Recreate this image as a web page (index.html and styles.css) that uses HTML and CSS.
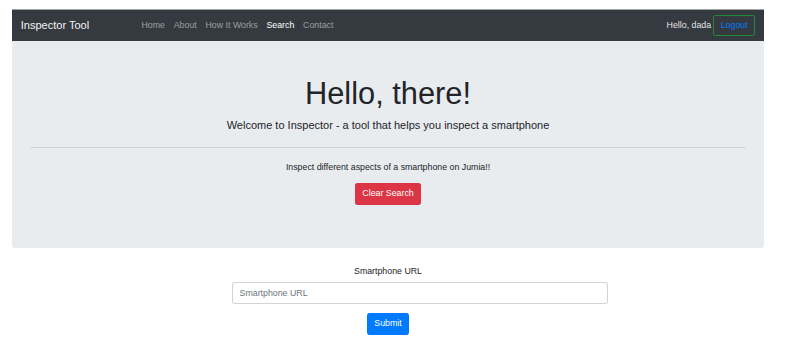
FILE: index.html
```html
<!DOCTYPE html>
<html lang="en">
<head>
  <meta charset="UTF-8">
  <meta name="viewport" content="width=device-width, initial-scale=1.0">
  <title>Inspector Tool</title>
  <link rel="stylesheet" href="styles.css">
</head>
<body>
  <div class="page">
    <nav class="navbar">
      <a class="brand" href="#">Inspector Tool</a>
      <ul class="nav-links">
        <li><a class="nav-link" href="#">Home</a></li>
        <li><a class="nav-link" href="#">About</a></li>
        <li><a class="nav-link" href="#">How It Works</a></li>
        <li><a class="nav-link active" href="#">Search</a></li>
        <li><a class="nav-link" href="#">Contact</a></li>
      </ul>
      <div class="user">
        <span class="greeting">Hello, dada</span>
        <button class="btn btn-logout">Logout</button>
      </div>
    </nav>

    <div class="jumbotron">
      <h1 class="display">Hello, there!</h1>
      <p class="lead">Welcome to Inspector - a tool that helps you inspect a smartphone</p>
      <hr class="divider">
      <p>Inspect different aspects of a smartphone on Jumia!!</p>
      <p><button class="btn btn-danger">Clear Search</button></p>
    </div>

    <form class="search-form">
      <div class="form-group">
        <label for="url">Smartphone URL</label>
        <input id="url" class="form-control" type="text" placeholder="Smartphone URL">
      </div>
      <button class="btn btn-primary" type="submit">Submit</button>
    </form>
  </div>
</body>
</html>
```

FILE: styles.css
```css
html {
  font-size: 8.8px;
}

body {
  margin: 0;
  font-family: "Liberation Sans", Arial, sans-serif;
  font-size: 1rem;
  line-height: 1.5;
  color: #212529;
  background: #fff;
}

.page {
  margin: 0 25px 0 12px;
  padding-top: 9px;
}

/* navbar */
.navbar {
  display: flex;
  align-items: center;
  background-color: #343a40;
  border-top: 1px solid #a0a3a6;
  padding: 0.5rem 1rem;
}

.brand {
  color: #f4f4f4;
  text-decoration: none;
  font-size: 1.25rem;
  line-height: 1.5;
  padding: 0.3125rem 0;
}

.nav-links {
  display: flex;
  list-style: none;
  margin: 0 0 0 48px;
  padding: 0;
}

.nav-link {
  display: block;
  padding: 0.5rem;
  color: rgba(255, 255, 255, 0.5);
  text-decoration: none;
}

.nav-link.active {
  color: #fff;
}

.user {
  margin-left: auto;
  display: flex;
  align-items: center;
}

.greeting {
  color: rgba(255, 255, 255, 0.9);
  margin-right: 2px;
}

/* buttons */
.btn {
  font-family: inherit;
  font-size: 1rem;
  line-height: 1.5;
  padding: 0.375rem 0.75rem;
  border: 1px solid transparent;
  border-radius: 0.25rem;
  cursor: pointer;
}

.btn-logout {
  background: transparent;
  color: #007bff;
  border-color: #238a3c;
}

.btn-danger {
  background-color: #dc3545;
  border-color: #dc3545;
  color: #fff;
}

.btn-primary {
  background-color: #007bff;
  border-color: #007bff;
  color: #fff;
}

/* jumbotron */
.jumbotron {
  background-color: #e9ecef;
  padding: 4rem 2rem 34px;
  margin-bottom: 17px;
  text-align: center;
  border-radius: 0 0 3px 3px;
}

.display {
  font-size: 3.5rem;
  font-weight: 300;
  line-height: 1.2;
  margin: 0 0 0.5rem;
}

.lead {
  font-size: 1.25rem;
  font-weight: 300;
  margin: 0 0 1rem;
}

.divider {
  margin: 1.5rem 0;
  border: 0;
  border-top: 1px solid rgba(0, 0, 0, 0.1);
}

.jumbotron p {
  margin-top: 0;
  margin-bottom: 1rem;
}

/* search form */
.search-form {
  text-align: center;
}

.form-group {
  margin-bottom: 1rem;
}

.form-group label {
  display: block;
  margin-bottom: 0.5rem;
}

.form-control {
  display: block;
  box-sizing: border-box;
  width: 376px;
  margin-left: 220px;
  height: calc(1.5em + 0.75rem + 2px);
  padding: 0.375rem 0.75rem;
  font-family: inherit;
  font-size: 1rem;
  line-height: 1.5;
  color: #495057;
  background: #fff;
  border: 1px solid #ced4da;
  border-radius: 0.25rem;
}

.form-control::placeholder {
  color: #6c757d;
}
```
